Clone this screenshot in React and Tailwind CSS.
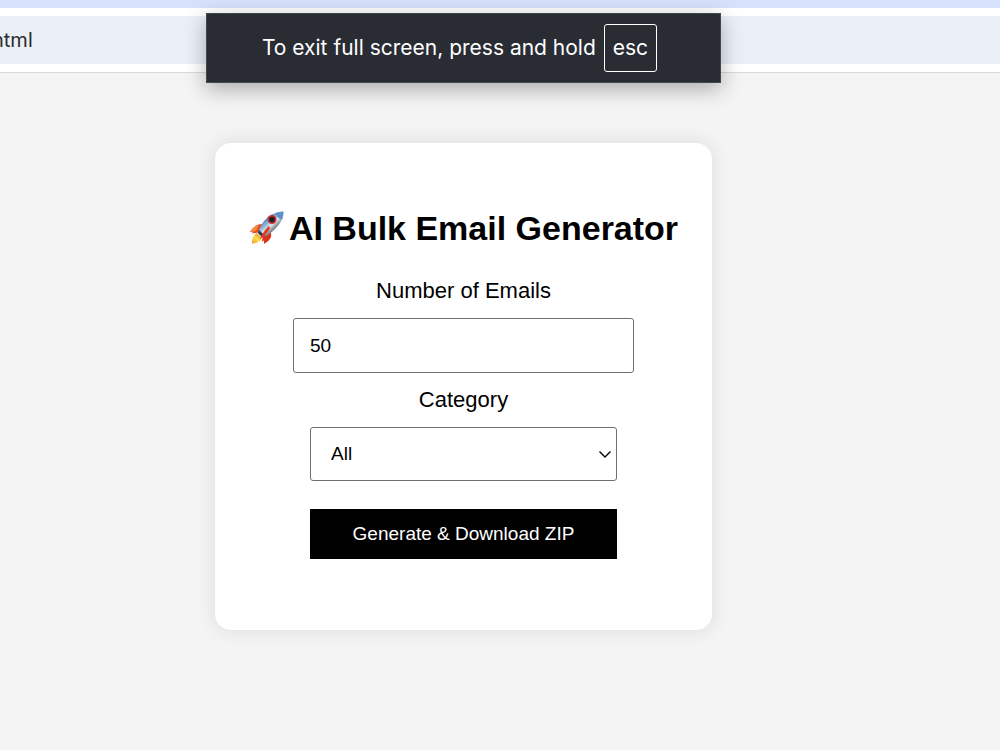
import { useState } from 'react';

const RocketIcon = () => (
  <svg viewBox="0 0 36 36" className="size-9 shrink-0" aria-hidden="true">
    <defs>
      <linearGradient id="hull" x1="12" y1="10" x2="24" y2="23" gradientUnits="userSpaceOnUse">
        <stop offset="0" stopColor="#3f6ea8" />
        <stop offset="0.35" stopColor="#86afdb" />
        <stop offset="0.6" stopColor="#dfe6ec" />
        <stop offset="1" stopColor="#4a5661" />
      </linearGradient>
      <linearGradient id="flame" x1="12" y1="23" x2="3" y2="34" gradientUnits="userSpaceOnUse">
        <stop offset="0" stopColor="#e8742a" />
        <stop offset="0.5" stopColor="#fbe04a" />
        <stop offset="1" stopColor="#f39a2d" />
      </linearGradient>
    </defs>
    <path d="M13 14C8 14 4 17 1 22L4 21.500L3 23.500L12 22Z" fill="#e8481f" />
    <path d="M1 22C3 18.500 6 16 10 15L7 21Z" fill="#f58a3c" />
    <path d="M22 23C23 28 20 31 15 34L15 30.500L13 31.500L14 24Z" fill="#d93318" />
    <path d="M8 23C4 25 3 29 3 34C7 33 11 32 13 28Z" fill="url(#flame)" />
    <path d="M34.500 1.500C26 2 20 5 15 11C12 15 10 19 9 23L13 27C18 26 22 23 26 19C31 14 34 9 34.500 1.500Z" fill="url(#hull)" />
    <path d="M34.500 1.500C31 1.700 28 2.500 26 3.300C27 6 30 9 33 10C34 7 34.500 4 34.500 1.500Z" fill="#5e8fc7" />
    <path d="M9 23L10 20L16 26L13 27Z" fill="#27364d" />
    <path d="M20 16C17 18 13 24 11 29C15 27 19 22 21 18Z" fill="#e23b1b" />
    <circle cx="23" cy="9.500" r="4.500" fill="#c9312a" />
    <circle cx="23" cy="9.500" r="2.800" fill="#1c1f2c" />
  </svg>
);

const BrowserBar = () => (
  <header className="border-b border-[#d9d9d9] bg-white pb-2">
    <div className="h-2 bg-[#d6e1fb]" />
    <div className="mt-2 flex h-12 items-center overflow-hidden bg-[#ebf0f8]">
      <span className="-ml-2 font-[Inter,sans-serif] text-[20px] text-[#2b2b2b]">html</span>
    </div>
  </header>
);

const FullScreenNotice = () => (
  <div className="pointer-events-none absolute inset-x-0 top-[13px] flex justify-center pr-[73px]">
    <div
      role="status"
      className="flex h-[70px] w-[515px] items-center justify-center gap-2 border border-[#44474d] bg-[#2a2c34] pr-2 font-[Inter,sans-serif] text-[21px] text-white shadow-[0_6px_20px_rgba(0,0,0,0.3)]"
    >
      <span className="whitespace-nowrap">To exit full screen, press and hold</span>
      <kbd className="flex h-12 items-center rounded-[3px] border border-white px-2 font-[Inter,sans-serif]">
        esc
      </kbd>
    </div>
  </div>
);

const EmailGenerator = () => {
  const [count, setCount] = useState('50');
  const [category, setCategory] = useState('all');

  return (
    <form
      onSubmit={e => e.preventDefault()}
      className="flex w-full max-w-[497px] flex-col items-center rounded-2xl bg-white px-8 pt-16 pb-[71px] text-black shadow-[0_0_20px_rgba(0,0,0,0.1)]"
    >
      <h1 className="flex items-center gap-1 text-[34px] leading-[42px] font-bold whitespace-nowrap">
        <RocketIcon />
        AI Bulk Email Generator
      </h1>

      <label htmlFor="count" className="mt-7 text-[22px] leading-[28px]">
        Number of Emails
      </label>
      <input
        id="count"
        type="number"
        value={count}
        onChange={e => setCount(e.target.value)}
        className="mt-[13px] h-[55px] w-[341px] rounded-[3px] border border-[#6f6f6f] bg-white px-4 text-[19px]"
      />

      <label htmlFor="category" className="mt-[13px] text-[22px] leading-[28px]">
        Category
      </label>
      <div className="relative mt-[13px] w-[307px]">
        <select
          id="category"
          value={category}
          onChange={e => setCategory(e.target.value)}
          className="h-[54px] w-full appearance-none rounded-[3px] border border-[#6f6f6f] bg-white px-5 text-[19px]"
        >
          <option value="all">All</option>
        </select>
        <svg
          viewBox="0 0 14 10"
          className="pointer-events-none absolute inset-y-0 right-[5px] my-auto h-[10px] w-[14px]"
          fill="none"
          stroke="currentColor"
          strokeWidth="1.400"
          aria-hidden="true"
        >
          <path d="M1.500 2.500L7 8L12.500 2.500" />
        </svg>
      </div>

      <button type="submit" className="mt-7 h-[50px] w-[307px] bg-black text-[19px] text-white">
        Generate &amp; Download ZIP
      </button>
    </form>
  );
};

const App = () => {
  return (
    <div className="relative min-h-screen bg-[#f4f4f4] font-['Liberation_Sans',Arial,sans-serif]">
      <BrowserBar />
      <main className="flex justify-center pt-[70px] pr-[73px]">
        <EmailGenerator />
      </main>
      <FullScreenNotice />
    </div>
  );
};

export default App;
